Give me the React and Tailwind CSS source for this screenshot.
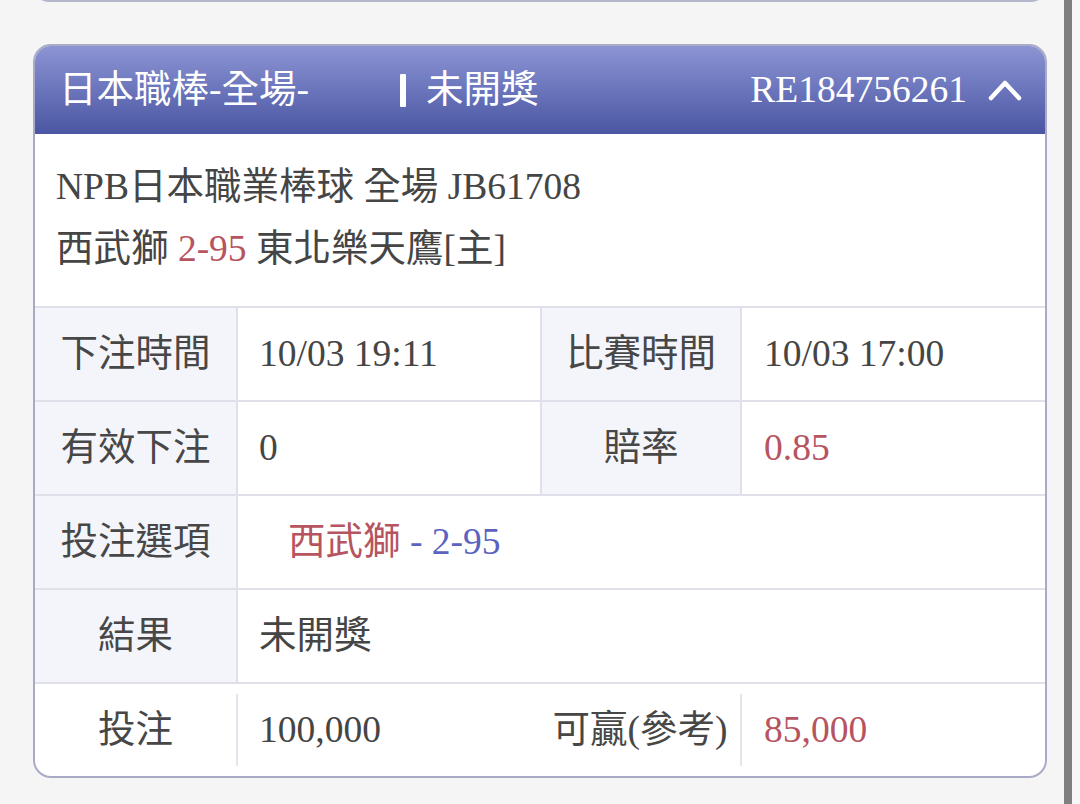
import React from 'react';

const RED = 'text-[#b6545f]';

function Row({ children }) {
    return (
        <div className="flex h-[94px] border-t-2 border-[#dfe0ea]">
            {children}
        </div>
    );
}

function Label({ text, w = 'w-[201px]' }) {
    return (
        <div className={`${w} shrink-0 flex items-center justify-center bg-[#f4f5fa] text-[#474747]`}>
            {text}
        </div>
    );
}

function Value({ children, className = '' }) {
    return (
        <div className={`flex items-center border-l-2 border-[#dfe0ea] ${className}`}>
            {children}
        </div>
    );
}

export default function App() {
    return (
        <div className="flex min-h-[804px] bg-[#f5f5f6] font-['Liberation_Serif','Noto_Sans_CJK_TC',serif] text-[37.5px] text-[#454545]">
            <div className="w-[1064px] shrink-0 pl-[33px] pr-[17px]">
                {/* bottom edge of the previous ticket */}
                <div className="mt-[-22px] h-[24px] rounded-b-[16px] border-2 border-t-0 border-[#b4b6cc] bg-white" />

                <div className="mt-[42px] overflow-hidden rounded-[18px] border-2 border-[#a9abc6] bg-white">
                    {/* header */}
                    <div className="flex h-[88px] items-center bg-gradient-to-b from-[#8c94d3] to-[#4b56a3] pl-[24px] pr-[23px] text-white">
                        <div className="w-[341px] shrink-0">日本職棒-全場-</div>
                        <div className="h-[33px] w-[6px] rounded-[1px] bg-white" />
                        <div className="ml-[20px]">未開獎</div>
                        <div className="ml-auto">RE184756261</div>
                        <svg className="ml-[21px]" width="34" height="24" viewBox="0 0 34 24" fill="none">
                            <polyline points="3,20 17,5 31,20" stroke="white" strokeWidth="4.5" strokeLinecap="round" strokeLinejoin="round" />
                        </svg>
                    </div>

                    {/* match info */}
                    <div className="pl-[21px] pt-[22px] pb-[26px] leading-[62px]">
                        <div>NPB日本職業棒球 全場 JB61708</div>
                        <div>
                            西武獅 <span className={RED}>2-95</span> 東北樂天鷹[主]
                        </div>
                    </div>

                    {/* details */}
                    <Row>
                        <Label text="下注時間" />
                        <Value className="w-[304px] pl-[21px]">10/03 19:11</Value>
                        <div className="flex border-l-2 border-[#dfe0ea]">
                            <Label text="比賽時間" w="w-[198px]" />
                        </div>
                        <Value className="flex-1 pl-[22px]">10/03 17:00</Value>
                    </Row>
                    <Row>
                        <Label text="有效下注" />
                        <Value className="w-[304px] pl-[21px]">0</Value>
                        <div className="flex border-l-2 border-[#dfe0ea]">
                            <Label text="賠率" w="w-[198px]" />
                        </div>
                        <Value className={`flex-1 pl-[22px] ${RED}`}>0.85</Value>
                    </Row>
                    <Row>
                        <Label text="投注選項" />
                        <Value className="flex-1 pl-[50px]">
                            <span className={RED}>西武獅</span>
                            <span className="text-[#5a63c0]">&nbsp;- 2-95</span>
                        </Value>
                    </Row>
                    <Row>
                        <Label text="結果" />
                        <Value className="flex-1 pl-[21px]">未開獎</Value>
                    </Row>
                    <div className="flex h-[94px] items-center border-t-2 border-[#dfe0ea]">
                        <div className="flex w-[201px] shrink-0 justify-center text-[#474747]">投注</div>
                        <div className="h-[72px] w-[2px] bg-[#e3e4ec]" />
                        <div className="w-[302px] pl-[21px]">100,000</div>
                        <div className="flex w-[200px] justify-center text-[#474747]">可贏(參考)</div>
                        <div className="h-[72px] w-[2px] bg-[#e3e4ec]" />
                        <div className={`pl-[22px] ${RED}`}>85,000</div>
                    </div>
                </div>
            </div>
            <div className="w-[8px] shrink-0 bg-[#7f7f7f]" />
            <div className="flex-1 bg-[#f7f7f7]" />
        </div>
    );
}
